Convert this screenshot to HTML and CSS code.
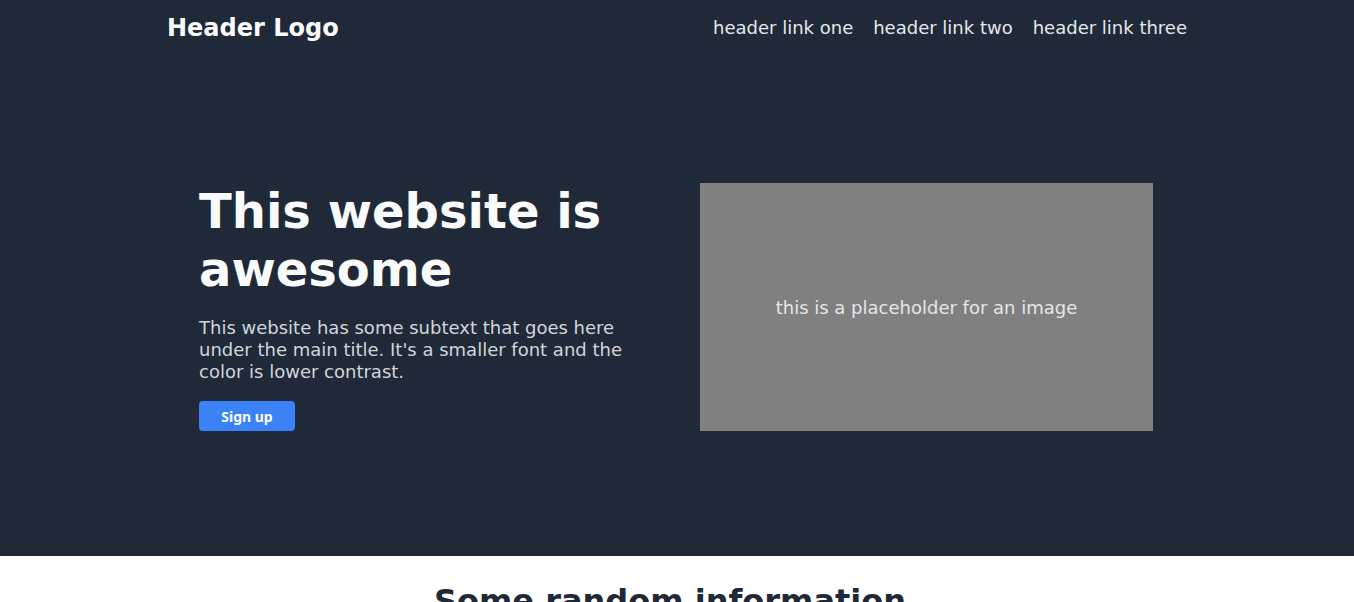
FILE: index.html
```html
<!DOCTYPE html>
<html>
<head>
<meta charset="utf-8">
<link rel="stylesheet" href="styles.css">
</head>
<body>
<div class="dark">
  <header class="container header">
    <div class="logo">Header Logo</div>
    <nav class="links">
      <a href="#">header link one</a>
      <a href="#">header link two</a>
      <a href="#">header link three</a>
    </nav>
  </header>
  <section class="container hero">
    <div class="hero-text">
      <h1>This website is awesome</h1>
      <p>This website has some subtext that goes here under the main title. It's a smaller font and the color is lower contrast.</p>
      <button class="btn">Sign up</button>
    </div>
    <div class="placeholder">this is a placeholder for an image</div>
  </section>
</div>
<section class="info">
  <h2>Some random information</h2>
</section>
</body>
</html>
```
FILE: styles.css
```css
* { box-sizing: border-box; }
body {
  margin: 0;
  font-family: "DejaVu Sans", sans-serif;
  background: #ffffff;
}
.dark { background: #1f2937; }
.container {
  width: 1020px;
  margin: 0 auto;
}
.header {
  display: flex;
  justify-content: space-between;
  align-items: center;
  height: 55px;
}
.logo {
  color: #f9fafb;
  font-size: 24px;
  font-weight: bold;
}
.links { display: flex; gap: 20px; }
.links a {
  color: #e5e7eb;
  font-size: 18px;
  text-decoration: none;
}
.hero {
  display: grid;
  grid-template-columns: 453px 453px;
  gap: 48px;
  padding: 128px 32px 125px;
}
.hero-text h1 {
  margin: 0 0 19px;
  color: #f9fafb;
  font-size: 48px;
  line-height: 1.2;
  font-weight: bold;
}
.hero-text p {
  margin: 0 0 18px;
  color: #d1d5db;
  font-size: 18px;
  line-height: 22px;
}
.btn {
  background: #3b82f6;
  color: #ffffff;
  border: none;
  border-radius: 4px;
  width: 96px;
  height: 30px;
  font-family: "Noto Sans", sans-serif;
  font-weight: bold;
  font-size: 14px;
  padding: 0;
}
.placeholder {
  background: #808080;
  color: #e5e7eb;
  height: 248px;
  display: flex;
  align-items: center;
  justify-content: center;
  font-size: 18px;
}
.info {
  padding: 26px 14px 0 0;
  text-align: center;
}
.info h2 {
  margin: 0;
  font-size: 32px;
  line-height: 1.2;
  color: #1f2937;
  font-weight: bold;
}
```
